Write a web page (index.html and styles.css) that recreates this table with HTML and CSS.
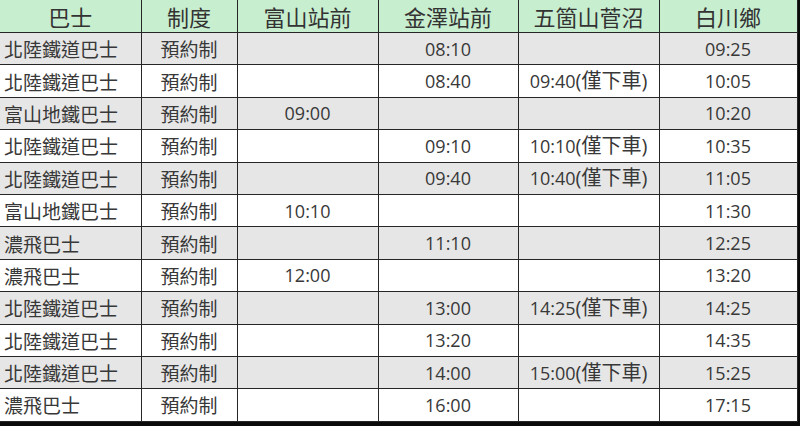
FILE: index.html
```html
<!DOCTYPE html>
<html lang="zh-Hant">
<head>
<meta charset="utf-8">
<title>巴士時刻表</title>
<link rel="stylesheet" href="styles.css">
</head>
<body>
<table class="timetable">
  <colgroup>
    <col class="c-bus">
    <col class="c-sys">
    <col class="c-toyama">
    <col class="c-kanazawa">
    <col class="c-gokayama">
    <col class="c-shirakawa">
  </colgroup>
  <thead>
    <tr class="head">
      <th>巴士</th><th>制度</th><th>富山站前</th><th>金澤站前</th><th>五箇山菅沼</th><th>白川鄉</th>
    </tr>
  </thead>
  <tbody>
    <tr class="grey"><td class="name">北陸鐵道巴士</td><td class="cjk">預約制</td><td></td><td>08:10</td><td></td><td>09:25</td></tr>
    <tr><td class="name">北陸鐵道巴士</td><td class="cjk">預約制</td><td></td><td>08:40</td><td>09:40<span class="note">(僅下車)</span></td><td>10:05</td></tr>
    <tr class="grey"><td class="name">富山地鐵巴士</td><td class="cjk">預約制</td><td>09:00</td><td></td><td></td><td>10:20</td></tr>
    <tr><td class="name">北陸鐵道巴士</td><td class="cjk">預約制</td><td></td><td>09:10</td><td>10:10<span class="note">(僅下車)</span></td><td>10:35</td></tr>
    <tr class="grey"><td class="name">北陸鐵道巴士</td><td class="cjk">預約制</td><td></td><td>09:40</td><td>10:40<span class="note">(僅下車)</span></td><td>11:05</td></tr>
    <tr><td class="name">富山地鐵巴士</td><td class="cjk">預約制</td><td>10:10</td><td></td><td></td><td>11:30</td></tr>
    <tr class="grey"><td class="name">濃飛巴士</td><td class="cjk">預約制</td><td></td><td>11:10</td><td></td><td>12:25</td></tr>
    <tr><td class="name">濃飛巴士</td><td class="cjk">預約制</td><td>12:00</td><td></td><td></td><td>13:20</td></tr>
    <tr class="grey"><td class="name">北陸鐵道巴士</td><td class="cjk">預約制</td><td></td><td>13:00</td><td>14:25<span class="note">(僅下車)</span></td><td>14:25</td></tr>
    <tr><td class="name">北陸鐵道巴士</td><td class="cjk">預約制</td><td></td><td>13:20</td><td></td><td>14:35</td></tr>
    <tr class="grey"><td class="name">北陸鐵道巴士</td><td class="cjk">預約制</td><td></td><td>14:00</td><td>15:00<span class="note">(僅下車)</span></td><td>15:25</td></tr>
    <tr><td class="name">濃飛巴士</td><td class="cjk">預約制</td><td></td><td>16:00</td><td></td><td>17:15</td></tr>
  </tbody>
</table>
</body>
</html>
```
FILE: styles.css
```css
html, body {
  margin: 0;
  padding: 0;
}
body {
  background: #0a0a0a;
  width: 800px;
  height: 426px;
  overflow: hidden;
}
.timetable {
  width: 797px;
  border-collapse: collapse;
  table-layout: fixed;
  background: #ffffff;
  font-family: "Open Sans", "Noto Sans CJK TC", sans-serif;
  color: #383838;
}
.c-bus { width: 141px; }
.c-sys { width: 96px; }
.c-toyama { width: 141px; }
.c-kanazawa { width: 140px; }
.c-gokayama { width: 141px; }
.c-shirakawa { width: 138px; }

.timetable th,
.timetable td {
  padding: 0;
  text-align: center;
  vertical-align: middle;
  white-space: nowrap;
  border-left: 1px solid #262626;
  border-bottom: 1px solid #262626;
  overflow: hidden;
}
.timetable th:first-child,
.timetable td:first-child {
  border-left: none;
}
.timetable th:last-child,
.timetable td:last-child {
  border-right: 1px solid #262626;
}
.head th {
  height: 32px;
  background: #c8eed0;
  font-family: "Noto Sans CJK TC", sans-serif;
  font-weight: 400;
  font-size: 22px;
  line-height: 1;
  color: #333333;
}
.timetable td {
  height: 31.4px;
  font-size: 18px;
  line-height: 1;
}
.timetable td.cjk,
.timetable td.name {
  font-family: "Noto Sans CJK TC", sans-serif;
  font-size: 19px;
}
.timetable td.name {
  text-align: left;
  padding-left: 4px;
}
.note {
  font-size: 20px;
  line-height: 1;
}
.timetable tr.grey td {
  background: #e6e6e6;
}
```
